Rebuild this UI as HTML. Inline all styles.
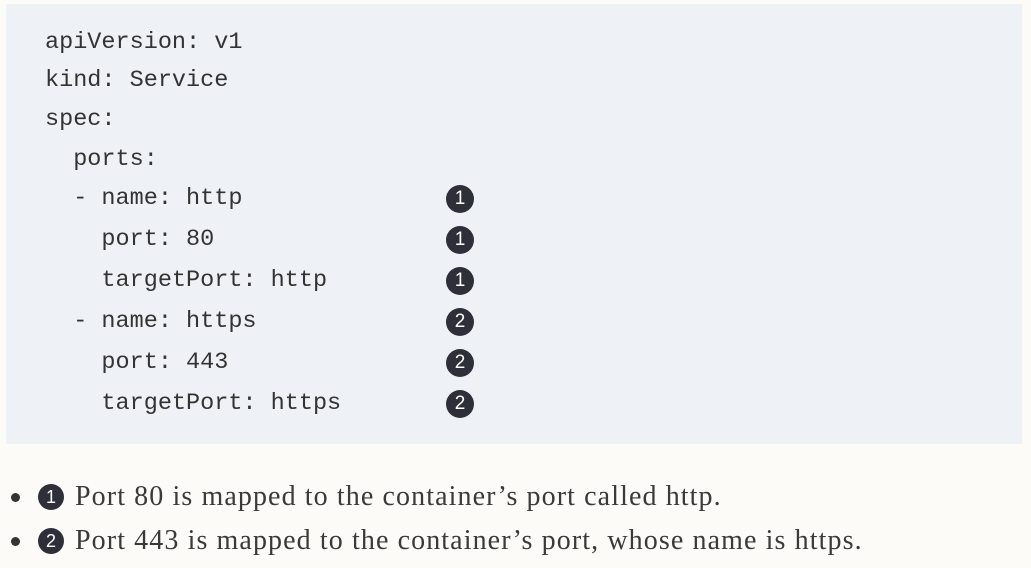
<!DOCTYPE html>
<html><head><meta charset="utf-8"><style>
body{margin:0;width:1031px;height:568px;background:#fcfbf8;position:relative;overflow:hidden}
.code{position:absolute;left:6px;top:4px;width:1016px;height:440px;background:#eef1f6}
.l{position:absolute;left:39px;font-family:"Liberation Mono",monospace;font-size:23.5px;color:#333;white-space:pre;line-height:30px}
.c{position:absolute;width:28px;height:28px;border-radius:50%;background:#2f2f3a;color:#fff;font-family:"Liberation Sans",sans-serif;font-size:19px;text-align:center;line-height:28px}
.t{position:absolute;left:75px;font-family:"Liberation Serif",serif;font-size:28px;letter-spacing:1.1px;color:#3a3a3a;white-space:nowrap;line-height:30px}
.b{position:absolute;left:11px;width:9px;height:9px;border-radius:50%;background:#333}
.s{position:absolute;left:38px;width:26px;height:26px;border-radius:50%;background:#2f2f3a;color:#fff;font-family:"Liberation Sans",sans-serif;font-size:18px;text-align:center;line-height:26px}
</style></head><body>
<div class="code">
<div class="l" style="top:24px">apiVersion: v1</div>
<div class="l" style="top:62px">kind: Service</div>
<div class="l" style="top:101px">spec:</div>
<div class="l" style="top:141px">  ports:</div>
<div class="l" style="top:180px">  - name: http</div>
<div class="l" style="top:221px">    port: 80</div>
<div class="l" style="top:262px">    targetPort: http</div>
<div class="l" style="top:303px">  - name: https</div>
<div class="l" style="top:344px">    port: 443</div>
<div class="l" style="top:385px">    targetPort: https</div>
<div class="c" style="left:440px;top:181px">1</div>
<div class="c" style="left:440px;top:222px">1</div>
<div class="c" style="left:440px;top:263px">1</div>
<div class="c" style="left:440px;top:304px">2</div>
<div class="c" style="left:440px;top:345px">2</div>
<div class="c" style="left:440px;top:386px">2</div>
</div>
<div class="b" style="top:493px"></div><div class="s" style="top:484px">1</div>
<div class="t" style="top:482px">Port 80 is mapped to the container’s port called http.</div>
<div class="b" style="top:537px"></div><div class="s" style="top:528px">2</div>
<div class="t" style="top:526px">Port 443 is mapped to the container’s port, whose name is https.</div>
</body></html>
